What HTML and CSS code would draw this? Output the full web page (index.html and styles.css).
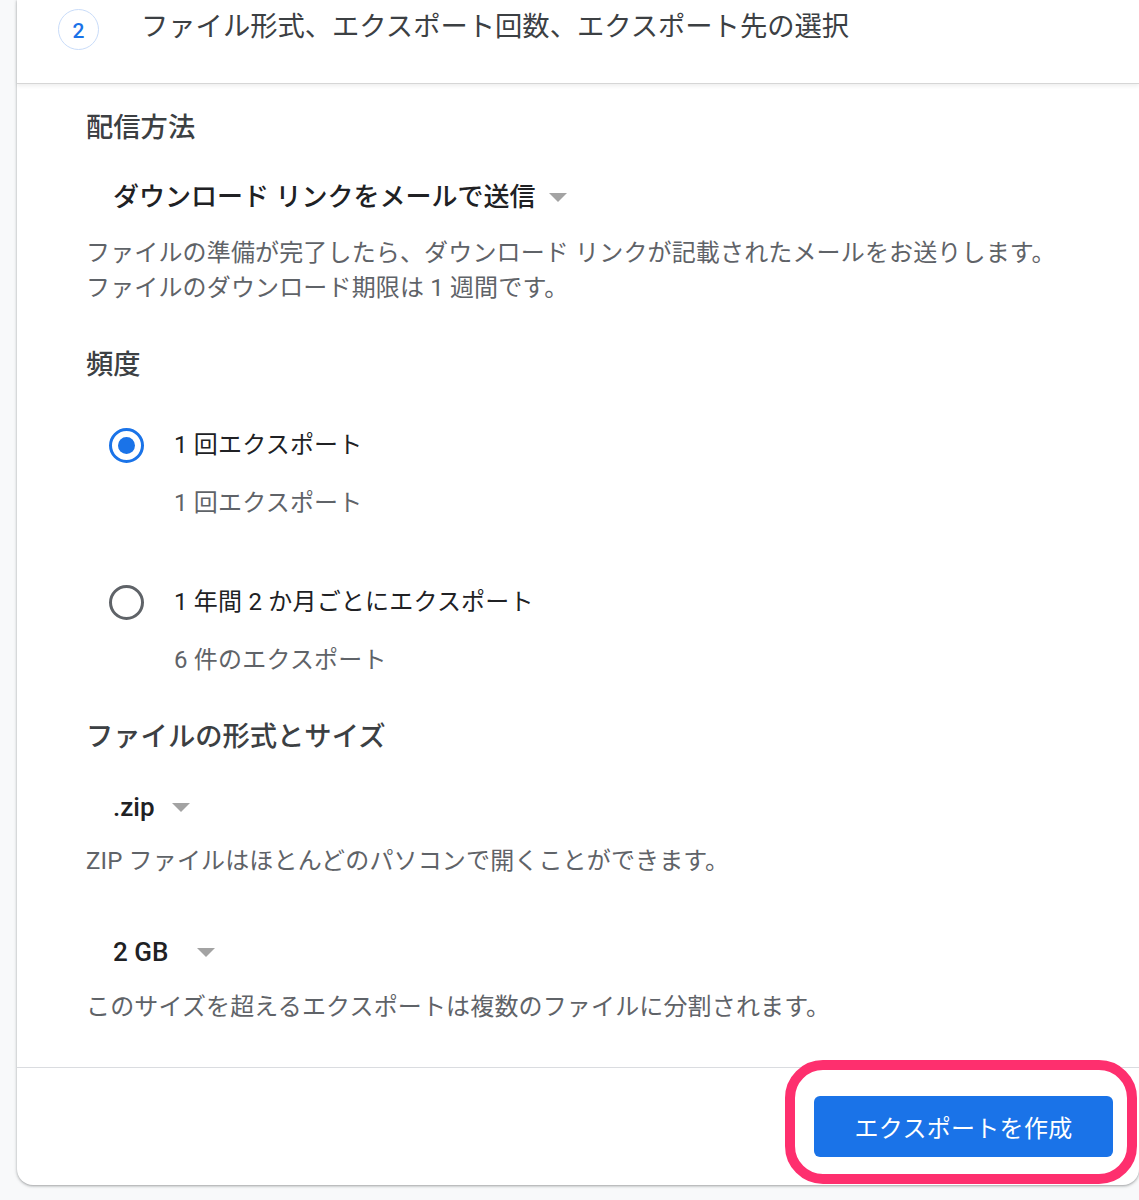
FILE: index.html
```html
<!DOCTYPE html>
<html lang="ja">
<head>
<meta charset="utf-8">
<title>エクスポート</title>
<link rel="stylesheet" href="styles.css">
</head>
<body>
<div class="page">
  <div class="card">
    <div class="step-header">
      <div class="step-num">2</div>
      <div class="step-title">ファイル形式、エクスポート回数、エクスポート先の選択</div>
    </div>
    <div class="step-body">
      <section class="group">
        <h2 class="group-title">配信方法</h2>
        <div class="select select-delivery">
          <span class="select-text">ダウンロード リンクをメールで送信</span>
          <svg class="caret" width="18" height="9" viewBox="0 0 18 9"><polygon points="0,0 18,0 9,9"/></svg>
        </div>
        <p class="hint hint-delivery">ファイルの準備が完了したら、ダウンロード リンクが記載されたメールをお送りします。<br>ファイルのダウンロード期限は 1 週間です。</p>
      </section>
      <section class="group group-freq">
        <h2 class="group-title">頻度</h2>
        <div class="option option-first">
          <span class="radio radio-checked"></span>
          <div class="option-text">
            <div class="option-label">1 回エクスポート</div>
            <div class="option-sub">1 回エクスポート</div>
          </div>
        </div>
        <div class="option option-second">
          <span class="radio"></span>
          <div class="option-text">
            <div class="option-label">1 年間 2 か月ごとにエクスポート</div>
            <div class="option-sub">6 件のエクスポート</div>
          </div>
        </div>
      </section>
      <section class="group group-format">
        <h2 class="group-title">ファイルの形式とサイズ</h2>
        <div class="select select-type">
          <span class="select-text">.zip</span>
          <svg class="caret" width="18" height="9" viewBox="0 0 18 9"><polygon points="0,0 18,0 9,9"/></svg>
        </div>
        <p class="hint hint-type">ZIP ファイルはほとんどのパソコンで開くことができます。</p>
        <div class="select select-size">
          <span class="select-text">2 GB</span>
          <svg class="caret" width="18" height="9" viewBox="0 0 18 9"><polygon points="0,0 18,0 9,9"/></svg>
        </div>
        <p class="hint hint-size">このサイズを超えるエクスポートは複数のファイルに分割されます。</p>
      </section>
    </div>
    <div class="step-footer">
      <button class="btn-primary" type="button">エクスポートを作成</button>
    </div>
    <div class="highlight"></div>
  </div>
</div>
</body>
</html>
```
FILE: styles.css
```css
html, body {
  margin: 0;
  padding: 0;
  background: #f8f9fa;
  font-family: "Roboto", "Noto Sans CJK JP", sans-serif;
}

.page {
  padding-left: 17px;
  height: 1200px;
  box-sizing: border-box;
  overflow: hidden;
}

.card {
  position: relative;
  background: #fff;
  border-radius: 0 0 16px 16px;
  box-shadow: 0 1px 2px rgba(60, 64, 67, 0.3), 0 1px 3px 1px rgba(60, 64, 67, 0.15);
}

.step-header {
  position: relative;
  z-index: 1;
  display: flex;
  align-items: flex-start;
  padding: 7px 0 0 41px;
  height: 76px;
  border-bottom: 1px solid #d6d6d6;
  box-shadow: 0 2px 4px rgba(0, 0, 0, 0.07);
}

.step-num {
  width: 41px;
  height: 41px;
  margin-top: 2px;
  box-sizing: border-box;
  border: 1.5px solid #c9dcf9;
  border-radius: 50%;
  display: flex;
  align-items: center;
  justify-content: center;
  color: #1a73e8;
  font-size: 21px;
  font-weight: 500;
  line-height: 1;
  padding-top: 3px;
}

.step-title {
  margin-left: 42px;
  font-size: 27.3px;
  line-height: 40px;
  color: #3c4043;
}

.step-body {
  padding: 26px 0 42px 69px;
}

.group-title {
  margin: 0;
  font-size: 27.3px;
  line-height: 36px;
  font-weight: 500;
  color: #3c4043;
}

.group-freq .group-title,
.group-format .group-title {
  margin-top: 41px;
}

.select {
  display: flex;
  align-items: center;
  padding-left: 27px;
  height: 36px;
}

.select-text {
  font-size: 26px;
  line-height: 36px;
  font-weight: 500;
  color: #202124;
}

.caret {
  fill: #a3a3a3;
  margin-left: 14px;
  margin-top: 1px;
}

.select-delivery { margin-top: 33px; }
.select-type { margin-top: 34px; }
.select-type .caret { margin-left: 17px; }
.select-size { margin-top: 55px; }
.select-size .caret { margin-left: 29px; }

.hint {
  margin: 0;
  font-size: 24px;
  line-height: 35px;
  color: #5f6368;
  letter-spacing: 0.15px;
}

.hint-delivery { margin-top: 21px; }
.hint-type { margin-top: 19px; }
.hint-size { margin-top: 20px; }

.option {
  display: grid;
  grid-template-columns: 35px 1fr;
  column-gap: 30px;
  padding-left: 23px;
}

.option-first { margin-top: 44px; }
.option-second { margin-top: 63px; }

.radio {
  width: 35px;
  height: 35px;
  margin-top: 1px;
  box-sizing: border-box;
  border: 3.5px solid #5f6368;
  border-radius: 50%;
  display: flex;
  align-items: center;
  justify-content: center;
}

.radio-checked {
  border-color: #1a73e8;
}

.radio-checked::after {
  content: "";
  width: 17px;
  height: 17px;
  border-radius: 50%;
  background: #1a73e8;
}

.option-label {
  font-size: 24px;
  line-height: 36px;
  color: #202124;
  letter-spacing: 0.2px;
}

.option-sub {
  margin-top: 22px;
  font-size: 24px;
  line-height: 36px;
  color: #5f6368;
  letter-spacing: 0.2px;
}

.step-footer {
  border-top: 1px solid #dadce0;
  display: flex;
  justify-content: flex-end;
  padding: 28px 26px 28px 0;
}

.btn-primary {
  width: 299px;
  height: 61px;
  border: none;
  border-radius: 6px;
  background: #1a73e8;
  color: #fff;
  font-family: "Roboto", "Noto Sans CJK JP", sans-serif;
  font-size: 24px;
  font-weight: 400;
  letter-spacing: 0.3px;
  padding: 0;
}

.highlight {
  position: absolute;
  right: 2px;
  bottom: 1px;
  width: 352px;
  height: 124px;
  box-sizing: border-box;
  border: 10px solid #fe2f6e;
  border-radius: 38px;
  pointer-events: none;
}
```
